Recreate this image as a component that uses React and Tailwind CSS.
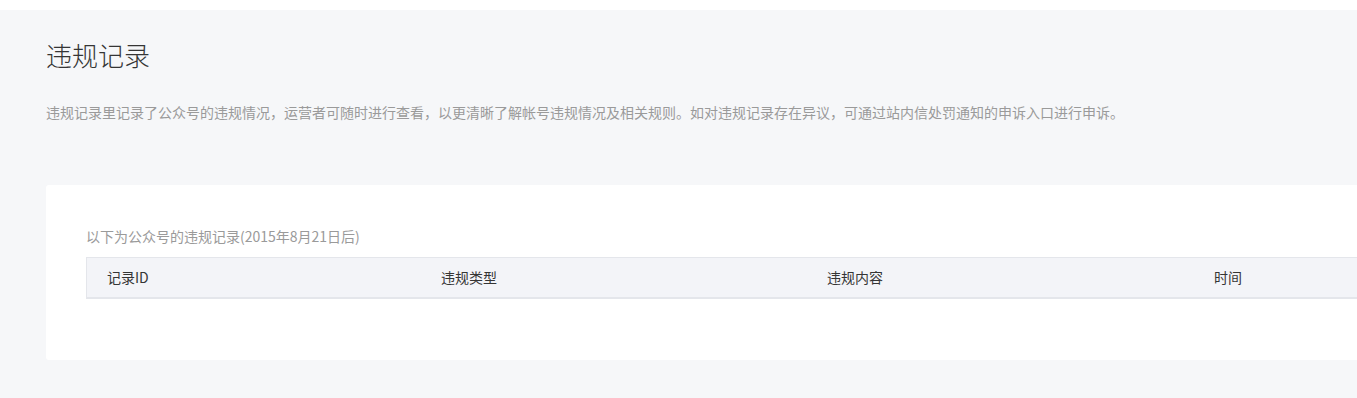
const columns = [
  { label: '记录ID', width: 'w-[334px]' },
  { label: '违规类型', width: 'w-[386px]' },
  { label: '违规内容', width: 'w-[387px]' },
  { label: '时间', width: 'w-[300px]' },
]

export default function App() {
  return (
    <div
      className="min-h-[398px] bg-white pt-[10px] overflow-hidden"
      style={{ fontFamily: '"Noto Sans CJK SC", "Noto Sans", sans-serif' }}
    >
      <div className="bg-[#f6f7f9] min-h-[388px] pl-[46px] pt-[27px]">
        <h1 className="text-[26px] leading-[36px] text-[#353535] font-light">违规记录</h1>
        <p className="mt-[29px] text-[14px] leading-[20px] text-[#9a9a9a] whitespace-nowrap">
          违规记录里记录了公众号的违规情况，运营者可随时进行查看，以更清晰了解帐号违规情况及相关规则。如对违规记录存在异议，可通过站内信处罚通知的申诉入口进行申诉。
        </p>

        {/* records card */}
        <div className="mt-[63px] bg-white rounded-[3px] pl-[40px] pt-[41px] pb-[61px] w-[1400px]">
          <div className="text-[14px] leading-[20px] text-[#9a9a9a]">
            以下为公众号的违规记录(2015年8月21日后)
          </div>
          <div className="mt-[11px] flex h-[42px] bg-[#f3f4f8] border-t border-l border-[#e4e6eb] border-b-2 border-b-[#e4e6eb]">
            {columns.map((col) => (
              <div
                key={col.label}
                className={`${col.width} shrink-0 flex items-center pl-[20px] text-[14px] text-[#353535]`}
              >
                {col.label}
              </div>
            ))}
          </div>
        </div>
      </div>
    </div>
  )
}
